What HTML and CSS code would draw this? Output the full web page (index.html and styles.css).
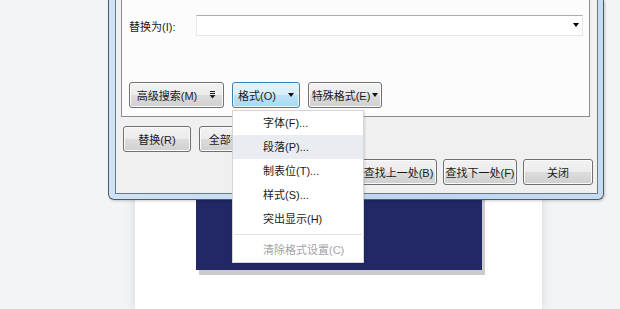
FILE: index.html
```html
<!DOCTYPE html>
<html lang="zh-CN">
<head>
	<meta charset="UTF-8">
	<title>查找和替换</title>
	<link rel="stylesheet" href="styles.css">
</head>
<body>
	<div class="workspace">
		<div class="page">
			<div class="banner"></div>
		</div>
	</div>

	<div class="dialog">
		<div class="client">
			<div class="panel">
				<div class="field-row">
					<span class="field-label">替换为(I):</span>
					<div class="combo"><span class="combo-arrow"></span></div>
				</div>
				<div class="btn-row">
					<button class="btn w-more">高级搜索(M)
						<svg class="more-icon" width="7" height="8" viewBox="0 0 7 8">
							<rect x="1" y="0" width="5" height="1" fill="#222"/>
							<rect x="1" y="2" width="5" height="1" fill="#222"/>
							<polygon points="0.5,4 6.5,4 3.5,7.5" fill="#222"/>
						</svg>
					</button>
					<button class="btn btn-active w-format">格式(O)<span class="caret"></span></button>
					<button class="btn w-special">特殊格式(E)<span class="caret"></span></button>
				</div>
			</div>
			<div class="action-row">
				<button class="btn w-replace">替换(R)</button>
				<button class="btn w-all">全部替换(A)</button>
			</div>
			<div class="action-row action-end">
				<button class="btn w-prev">查找上一处(B)</button>
				<button class="btn w-next">查找下一处(F)</button>
				<button class="btn w-close">关闭</button>
			</div>
		</div>
	</div>

	<ul class="menu">
		<li>字体(F)...</li>
		<li class="hover">段落(P)...</li>
		<li>制表位(T)...</li>
		<li>样式(S)...</li>
		<li>突出显示(H)</li>
		<li class="sep"></li>
		<li class="disabled">清除格式设置(C)</li>
	</ul>
</body>
</html>
```

FILE: styles.css
```css
*{
	margin: 0;
	padding: 0;
	box-sizing: border-box;
}
ul, ol{
	list-style: none;
}
body{
	width: 620px;
	height: 309px;
	overflow: hidden;
	background: #f3f4f6;
	font: 11px "Liberation Sans", "Noto Sans CJK SC", sans-serif;
	color: #1a1a1a;
	position: relative;
}
.workspace{
	display: flex;
	padding-left: 135px;
}
.page{
	width: 407px;
	height: 309px;
	background: #fff;
	box-shadow: 0 0 10px rgba(0,0,0,.13);
	padding: 186px 0 0 61px;
}
.banner{
	width: 286px;
	height: 84px;
	background: #222866;
	box-shadow: 3px 5px 0 #cbcbcb;
}

/* 对话框窗口 */
.dialog{
	position: absolute;
	left: 108px;
	top: 0;
	width: 496px;
	height: 200px;
	border: 1px solid #4f5963;
	border-top: none;
	border-radius: 0 0 6px 6px;
	padding: 0 5px 5px 6px;
	background: linear-gradient(90deg, #cfe2f5, #bcd6f0 60%, #c6dcf2);
	box-shadow: 1px 1px 3px rgba(0,0,0,.2);
}
.client{
	height: 100%;
	border: 1px solid #6d7885;
	border-top: none;
	background: #f0f0f0;
	padding: 0 4px 8px 5px;
}
.panel{
	border: 1px solid #898c95;
	border-top: none;
	background: #fcfcfc;
	margin-right: 3px;
	padding: 15px 6px 8px 7px;
}
.field-row{
	display: flex;
	align-items: center;
	height: 21px;
}
.field-label{
	width: 67px;
}
.combo{
	flex: 1;
	height: 21px;
	background: #fff;
	border: 1px solid #e3e9ef;
	border-top-color: #abadb3;
	position: relative;
}
.combo-arrow{
	position: absolute;
	right: 3px;
	top: 7px;
	border-left: 3.5px solid transparent;
	border-right: 3.5px solid transparent;
	border-top: 4px solid #000;
}
.btn-row{
	display: flex;
	gap: 8px;
	margin-top: 46px;
}
.action-row{
	display: flex;
	gap: 8px;
	margin: 9px 0 0 2px;
}
.action-end{
	justify-content: flex-end;
	gap: 6px;
	margin-top: 7px;
}
.btn{
	height: 26px;
	padding: 0;
	white-space: nowrap;
	display: flex;
	align-items: center;
	justify-content: center;
	font: inherit;
	color: #1a1a1a;
	border: 1px solid #707070;
	border-radius: 3px;
	background: linear-gradient(#f2f2f2, #ebebeb 50%, #dddddd 50%, #cfcfcf);
	box-shadow: inset 0 0 0 1px #fbfbfb;
}
.btn-active{
	border-color: #3c7fb1;
	background: linear-gradient(#e4f3fc, #d6eefb 50%, #bde3f8 50%, #a9d8f3);
	box-shadow: inset 0 0 0 1px #e8f5fd;
}
.caret{
	display: inline-block;
	border-left: 3.5px solid transparent;
	border-right: 3.5px solid transparent;
	border-top: 4px solid #111;
	margin-left: 2px;
}
.w-format .caret{
	margin-left: 12px;
}
.more-icon{
	margin-left: 12px;
}
.w-more{width: 95px;}
.w-format{width: 68px;}
.w-special{width: 74px;}
.w-replace{width: 68px;}
.w-all{width: 78px;}
.w-prev{width: 77px;}
.w-next{width: 74px;}
.w-close{width: 70px;}

/* 下拉菜单 */
.menu{
	position: absolute;
	left: 232px;
	top: 110px;
	width: 132px;
	background: #fff;
	border: 1px solid #d5d5d5;
	box-shadow: 1px 1px 2px rgba(0,0,0,.12);
}
.menu li{
	height: 24px;
	line-height: 24px;
	padding-left: 30px;
}
.menu .hover{
	background: #e9ecf0;
}
.menu .sep{
	height: 7px;
	padding: 0;
	position: relative;
}
.menu .sep::after{
	content: "";
	position: absolute;
	left: 1px;
	right: 1px;
	top: 3px;
	border-top: 1px solid #e2e2e2;
}
.menu .disabled{
	color: #a3a3a3;
}
```
